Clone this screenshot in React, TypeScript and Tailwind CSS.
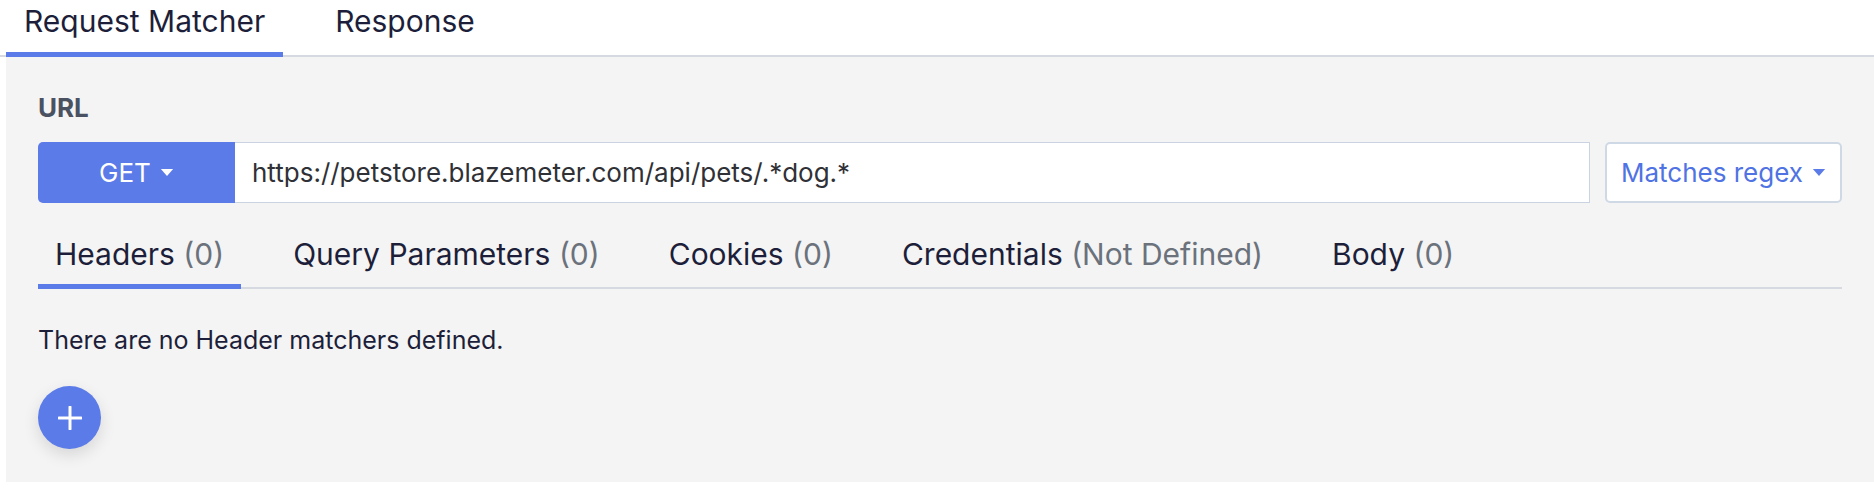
import React from 'react'

const font = { fontFamily: 'Inter, "Noto Sans", sans-serif' }

function Caret({ className }: { className: string }) {
  return (
    <svg viewBox="0 0 14 8" className={className} fill="currentColor">
      <path d="M0 0h14L7 8z" />
    </svg>
  )
}

const subTabs = [
  { label: 'Headers', count: '(0)', active: true },
  { label: 'Query Parameters', count: '(0)' },
  { label: 'Cookies', count: '(0)' },
  { label: 'Credentials', count: '(Not Defined)' },
  { label: 'Body', count: '(0)' },
]

export default function App() {
  return (
    <div className="w-[1874px] h-[491px] bg-white overflow-hidden text-[#1d1f3a]" style={font}>
      {/* top tabs */}
      <div className="flex pl-[6px] border-b-2 border-[#d6dae0] h-[57px]">
        <div className="pt-[3px] px-[18px] border-b-[5px] border-[#5b7be8] -mb-[2px] text-[30px] leading-[37px]">
          Request Matcher
        </div>
        <div className="pt-[3px] px-[18px] ml-[34px] text-[30px] leading-[37px]">Response</div>
      </div>

      <div className="ml-[6px] bg-[#f4f4f4] h-[425px] px-[32px] pt-[35px]">
        <div className="text-[26px] leading-[32px] font-bold text-[#4a5160]">URL</div>

        <div className="flex mt-[18px] h-[61px]">
          <button className="w-[197px] rounded-l-[5px] bg-[#5b7be8] text-white text-[26px] flex items-center justify-center gap-[9px]">
            GET
            <Caret className="w-[14px] h-[7px]" />
          </button>
          <div className="flex-1 bg-white border border-[#cad3e1] border-l-0 flex items-center pl-[17px] text-[26px] text-[#2f3136]">
            https://petstore.blazemeter.com/api/pets/.*dog.*
          </div>
          <button className="ml-[15px] w-[237px] bg-white border-2 border-[#cfd9e6] rounded-[5px] text-[#4f73e3] text-[26px] flex items-center justify-center gap-[9px]">
            Matches regex
            <Caret className="w-[14px] h-[7px] text-[#5b7be8]" />
          </button>
        </div>

        <div className="flex mt-[21px] border-b-2 border-[#d6dae0]">
          {subTabs.map((t, i) => (
            <div
              key={t.label}
              className={
                'px-[17px] pt-[12px] pb-[11px] -mb-[2px] text-[30px] leading-[37px] border-b-[5px] ' +
                (t.active ? 'border-[#5b7be8]' : 'border-transparent') +
                (i > 0 ? ' ml-[35px]' : '')
              }
            >
              {t.label} <span className="text-[#6b727c]">{t.count}</span>
            </div>
          ))}
        </div>

        <div className="mt-[35px] text-[25px] leading-[32px] text-[#1d1f3a]">
          There are no Header matchers defined.
        </div>

        <button className="mt-[30px] w-[63px] h-[63px] rounded-full bg-[#5b7be8] flex items-center justify-center shadow-[0_6px_16px_rgba(0,0,0,0.12)]">
          <svg viewBox="0 0 24 24" className="w-[24px] h-[24px]" stroke="white" strokeWidth="3" strokeLinecap="round">
            <path d="M12 1v22M1 12h22" />
          </svg>
        </button>
      </div>
    </div>
  )
}
